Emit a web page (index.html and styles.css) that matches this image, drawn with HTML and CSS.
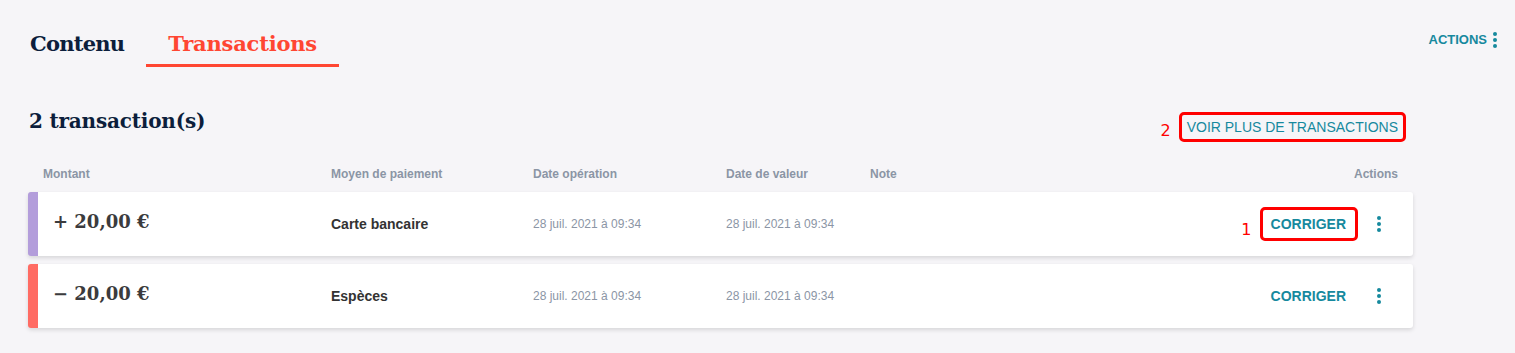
FILE: index.html
```html
<!DOCTYPE html>
<html lang="fr">
<head>
<meta charset="utf-8">
<title>Transactions</title>
<link rel="stylesheet" href="styles.css">
</head>
<body>
<div class="page">
  <header class="topbar">
    <nav class="tabs">
      <span class="tab tab-first">Contenu</span>
      <span class="tab tab-active">Transactions</span>
    </nav>
    <button class="top-actions">ACTIONS
      <svg class="kebab" width="4" height="16" viewBox="0 0 4 16"><circle cx="2" cy="2" r="2"/><circle cx="2" cy="8" r="2"/><circle cx="2" cy="14" r="2"/></svg>
    </button>
  </header>

  <section class="content">
    <div class="title-row">
      <h2 class="title">2 transaction(s)</h2>
      <a class="more-link annot" data-n="2">VOIR PLUS DE TRANSACTIONS</a>
    </div>

    <div class="head-row">
      <span>Montant</span>
      <span>Moyen de paiement</span>
      <span>Date opération</span>
      <span>Date de valeur</span>
      <span>Note</span>
      <span class="head-actions">Actions</span>
    </div>

    <div class="row row-credit">
      <span class="amount">+ 20,00 €</span>
      <span class="method">Carte bancaire</span>
      <span class="date">28 juil. 2021 à 09:34</span>
      <span class="date">28 juil. 2021 à 09:34</span>
      <span class="note"></span>
      <span class="row-actions">
        <button class="fix-btn annot" data-n="1">CORRIGER</button>
        <span class="kebab-btn"><svg class="kebab" width="4" height="16" viewBox="0 0 4 16"><circle cx="2" cy="2" r="2"/><circle cx="2" cy="8" r="2"/><circle cx="2" cy="14" r="2"/></svg></span>
      </span>
    </div>

    <div class="row row-debit">
      <span class="amount">− 20,00 €</span>
      <span class="method">Espèces</span>
      <span class="date">28 juil. 2021 à 09:34</span>
      <span class="date">28 juil. 2021 à 09:34</span>
      <span class="note"></span>
      <span class="row-actions">
        <button class="fix-btn">CORRIGER</button>
        <span class="kebab-btn"><svg class="kebab" width="4" height="16" viewBox="0 0 4 16"><circle cx="2" cy="2" r="2"/><circle cx="2" cy="8" r="2"/><circle cx="2" cy="14" r="2"/></svg></span>
      </span>
    </div>
  </section>
</div>
</body>
</html>
```

FILE: styles.css
```css
* { box-sizing: border-box; }

html, body {
  margin: 0;
  padding: 0;
  background: #f6f5f8;
  font-family: "Liberation Sans", Arial, sans-serif;
}

.page {
  width: 1515px;
  height: 353px;
  overflow: hidden;
}

.topbar {
  display: flex;
  justify-content: space-between;
  align-items: flex-start;
  padding: 28px 18px 0 8px;
}

.tabs {
  display: flex;
}

.tab {
  padding: 0 22px 4px;
  font-family: "DejaVu Serif", "Liberation Serif", serif;
  font-weight: bold;
  font-size: 21px;
  line-height: 32px;
  color: #0c1e3c;
  border-bottom: 3px solid transparent;
  letter-spacing: -0.2px;
}

.tab-first {
  letter-spacing: -0.75px;
}

.tab-active {
  color: #ff4632;
  border-bottom-color: #ff4632;
}

.top-actions {
  display: flex;
  align-items: center;
  gap: 6px;
  margin-top: 4px;
  padding: 0;
  border: 0;
  background: none;
  font-family: "Liberation Sans", Arial, sans-serif;
  font-weight: bold;
  font-size: 13px;
  line-height: 16px;
  color: #16899e;
}

.kebab { fill: #16899e; display: block; }

.content {
  padding: 39px 102px 0 28px;
}

.title-row {
  display: flex;
  justify-content: space-between;
  align-items: flex-start;
  height: 36px;
}

.title {
  margin: 0;
  padding-left: 1px;
  font-family: "DejaVu Serif", "Liberation Serif", serif;
  font-weight: bold;
  font-size: 20px;
  line-height: 30px;
  color: #0c1e3c;
  letter-spacing: -0.2px;
}

.more-link {
  margin-top: 9px;
  margin-right: 10px;
  padding: 4px 5px;
  font-size: 14px;
  line-height: 16px;
  color: #16899e;
}

.annot {
  position: relative;
  outline: 3px solid #ff0000;
  border-radius: 2px;
}

.annot::before {
  content: attr(data-n);
  position: absolute;
  right: calc(100% + 11px);
  bottom: -1px;
  font-family: "DejaVu Sans", sans-serif;
  font-size: 16px;
  line-height: 18px;
  font-weight: normal;
  color: #ff0000;
}

.head-row {
  display: grid;
  grid-template-columns: 288px 202px 193px 144px 1fr auto;
  padding: 24px 15px 10px 15px;
  font-size: 12px;
  line-height: 16px;
  font-weight: bold;
  color: #8b95a5;
}

.row {
  display: grid;
  grid-template-columns: 276px 202px 193px 144px 1fr auto;
  align-items: center;
  height: 64px;
  margin-bottom: 8px;
  padding: 0 22px 0 17px;
  background: #ffffff;
  border-left: 10px solid #b39ddb;
  border-radius: 3px;
  box-shadow: 0 2px 4px rgba(0, 0, 0, 0.13);
}

.row-debit { border-left-color: #ff6b63; }

.amount {
  margin-left: -2px;
  font-family: "DejaVu Serif", "Liberation Serif", serif;
  font-weight: bold;
  font-size: 18px;
  color: #3b3b3d;
  margin-top: -6px;
}

.method {
  font-size: 14px;
  font-weight: bold;
  color: #333333;
}

.date {
  font-size: 12px;
  color: #8b95a5;
}

.row-actions {
  display: flex;
  align-items: center;
  gap: 12px;
}

.fix-btn {
  padding: 6px 9px 6px 8px;
  border: 0;
  background: none;
  font-family: "Liberation Sans", Arial, sans-serif;
  font-weight: bold;
  font-size: 14px;
  line-height: 16px;
  color: #16899e;
}

.kebab-btn {
  display: flex;
  justify-content: center;
  width: 24px;
}
```
